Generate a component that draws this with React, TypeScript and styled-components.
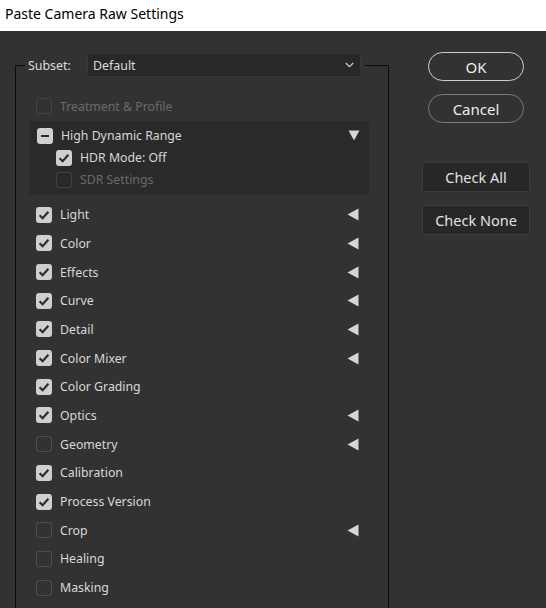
import React from "react";
import styled, { createGlobalStyle } from "styled-components";

const Global = createGlobalStyle`
  html, body { margin: 0; padding: 0; background: #323232; }
  body { font-family: "Noto Sans", "Open Sans", sans-serif; width: 546px; height: 608px; overflow: hidden; }
  * { box-sizing: border-box; }
`;

const TitleBar = styled.div`
  height: 31px;
  background: #ffffff;
  color: #000;
  font-size: 14px;
  padding-left: 5px;
  display: flex;
  align-items: center;
  padding-bottom: 5px;
`;

const Main = styled.div`
  height: 577px;
  overflow: hidden;
  background: #323232;
  display: flex;
  align-items: flex-start;
  padding-top: 22px;
  padding-left: 15px;
`;

const Frame = styled.fieldset`
  margin: 0;
  width: 374px;
  height: 620px;
  border: 1px solid #0c0c0c;
  padding: 15px 0 0 0;
`;

const Legend = styled.legend`
  margin-left: 9px;
  padding: 0 4px 0 3px;
  display: flex;
  align-items: center;
`;

const List = styled.div`
  padding-left: 20px;
`;

const SubsetLabel = styled.span`
  color: #dcdcdc;
  font-size: 12.4px;
  width: 59px;
`;

const Dropdown = styled.div`
  width: 274px;
  height: 24px;
  background: #282828;
  border: 1px solid #363636;
  border-radius: 2px;
  display: flex;
  align-items: center;
  justify-content: space-between;
  padding: 0 6px 0 5px;
  color: #dcdcdc;
  font-size: 12.4px;
`;

const Row = styled.div<{ $h?: number; $indent?: number }>`
  height: ${(p) => p.$h ?? 28.7}px;
  display: flex;
  align-items: center;
  padding-left: ${(p) => p.$indent ?? 0}px;
  width: 323px;
`;

const Label = styled.span<{ $disabled?: boolean }>`
  margin-left: 8px;
  font-size: 12.3px;
  color: ${(p) => (p.$disabled ? "#6a6a6a" : "#d8d8d8")};
  flex: 1;
`;

const Group = styled.div`
  margin-left: -7px;
  width: 340px;
  background: #2a2a2a;
  border-radius: 3px;
  padding: 4px 0 3px 8px;
  margin-bottom: 6.6px;
`;

const Box = styled.span<{ $state: "on" | "off" | "mixed"; $disabled?: boolean }>`
  width: 16px;
  height: 16px;
  flex: none;
  border-radius: 3px;
  display: inline-flex;
  align-items: center;
  justify-content: center;
  background: ${(p) => (p.$state === "off" ? "transparent" : "#cfcfcf")};
  border: ${(p) =>
    p.$state === "off"
      ? `1.5px solid ${p.$disabled ? "#444444" : "#4e4e4e"}`
      : "none"};
`;

const Arrow = styled.svg`
  flex: none;
  display: block;
`;

const Side = styled.div`
  margin-left: 33px;
  margin-top: -1px;
  width: 108px;
  display: flex;
  flex-direction: column;
  align-items: center;
`;

const Pill = styled.button<{ $primary?: boolean }>`
  width: 96px;
  height: 29px;
  border-radius: 15px;
  background: transparent;
  border: 1.5px solid ${(p) => (p.$primary ? "#cfcfcf" : "#7c7c7c")};
  color: #ececec;
  font-family: "Noto Sans", sans-serif;
  font-size: 15px;
  padding: 0;
  margin-bottom: 13px;
`;

const Plain = styled.button<{ $gapTop?: number }>`
  width: 108px;
  height: 30px;
  border-radius: 2px;
  background: #272727;
  border: 1px solid #3c3c3c;
  color: #e2e2e2;
  font-family: "Noto Sans", sans-serif;
  font-size: 14.5px;
  padding: 0;
  margin-top: ${(p) => p.$gapTop ?? 0}px;
  margin-bottom: 13px;
`;

const Check = ({ state, disabled }: { state: "on" | "off" | "mixed"; disabled?: boolean }) => (
  <Box $state={state} $disabled={disabled}>
    {state === "on" && (
      <svg width="16" height="16" viewBox="0 0 16 16">
        <path d="M3.6 8.3 L6.6 11.2 L12.4 4.8" fill="none" stroke="#2b2b2b" strokeWidth="2.1" />
      </svg>
    )}
    {state === "mixed" && (
      <svg width="16" height="16" viewBox="0 0 16 16">
        <rect x="4" y="7" width="8" height="2" fill="#2b2b2b" />
      </svg>
    )}
  </Box>
);

const LeftTri = () => (
  <Arrow width="12" height="13" viewBox="0 0 12 13">
    <polygon points="0.5,6.5 11.5,0.5 11.5,12.5" fill="#d6d6d6" />
  </Arrow>
);

const DownTri = () => (
  <Arrow width="12" height="11" viewBox="0 0 12 11">
    <polygon points="0.5,0.5 11.5,0.5 6,10.5" fill="#d6d6d6" />
  </Arrow>
);

type Item = { label: string; state: "on" | "off"; arrow: boolean };
const items: Item[] = [
  { label: "Light", state: "on", arrow: true },
  { label: "Color", state: "on", arrow: true },
  { label: "Effects", state: "on", arrow: true },
  { label: "Curve", state: "on", arrow: true },
  { label: "Detail", state: "on", arrow: true },
  { label: "Color Mixer", state: "on", arrow: true },
  { label: "Color Grading", state: "on", arrow: false },
  { label: "Optics", state: "on", arrow: true },
  { label: "Geometry", state: "off", arrow: true },
  { label: "Calibration", state: "on", arrow: false },
  { label: "Process Version", state: "on", arrow: false },
  { label: "Crop", state: "off", arrow: true },
  { label: "Healing", state: "off", arrow: false },
  { label: "Masking", state: "off", arrow: false },
];

export default function App() {
  return (
    <>
      <Global />
      <TitleBar>Paste Camera Raw Settings</TitleBar>
      <Main>
        <Frame>
          <Legend>
            <SubsetLabel>Subset:</SubsetLabel>
            <Dropdown>
              <span>Default</span>
              <svg width="9" height="6" viewBox="0 0 9 6">
                <path d="M0.8 1 L4.5 4.6 L8.2 1" fill="none" stroke="#cfcfcf" strokeWidth="1.2" />
              </svg>
            </Dropdown>
          </Legend>
          <List>
            <Row>
              <Check state="off" disabled />
              <Label $disabled>Treatment &amp; Profile</Label>
            </Row>
            <Group>
              <Row $h={22}>
                <Check state="mixed" />
                <Label>High Dynamic Range</Label>
                <DownTri />
              </Row>
              <Row $h={22} $indent={19}>
                <Check state="on" />
                <Label>HDR Mode: Off</Label>
              </Row>
              <Row $h={22} $indent={19}>
                <Check state="off" disabled />
                <Label $disabled>SDR Settings</Label>
              </Row>
            </Group>
            {items.map((it) => (
              <Row key={it.label}>
                <Check state={it.state} />
                <Label>{it.label}</Label>
                {it.arrow && <LeftTri />}
              </Row>
            ))}
          </List>
        </Frame>
        <Side>
          <Pill $primary>OK</Pill>
          <Pill>Cancel</Pill>
          <Plain $gapTop={26}>Check All</Plain>
          <Plain>Check None</Plain>
        </Side>
      </Main>
    </>
  );
}
